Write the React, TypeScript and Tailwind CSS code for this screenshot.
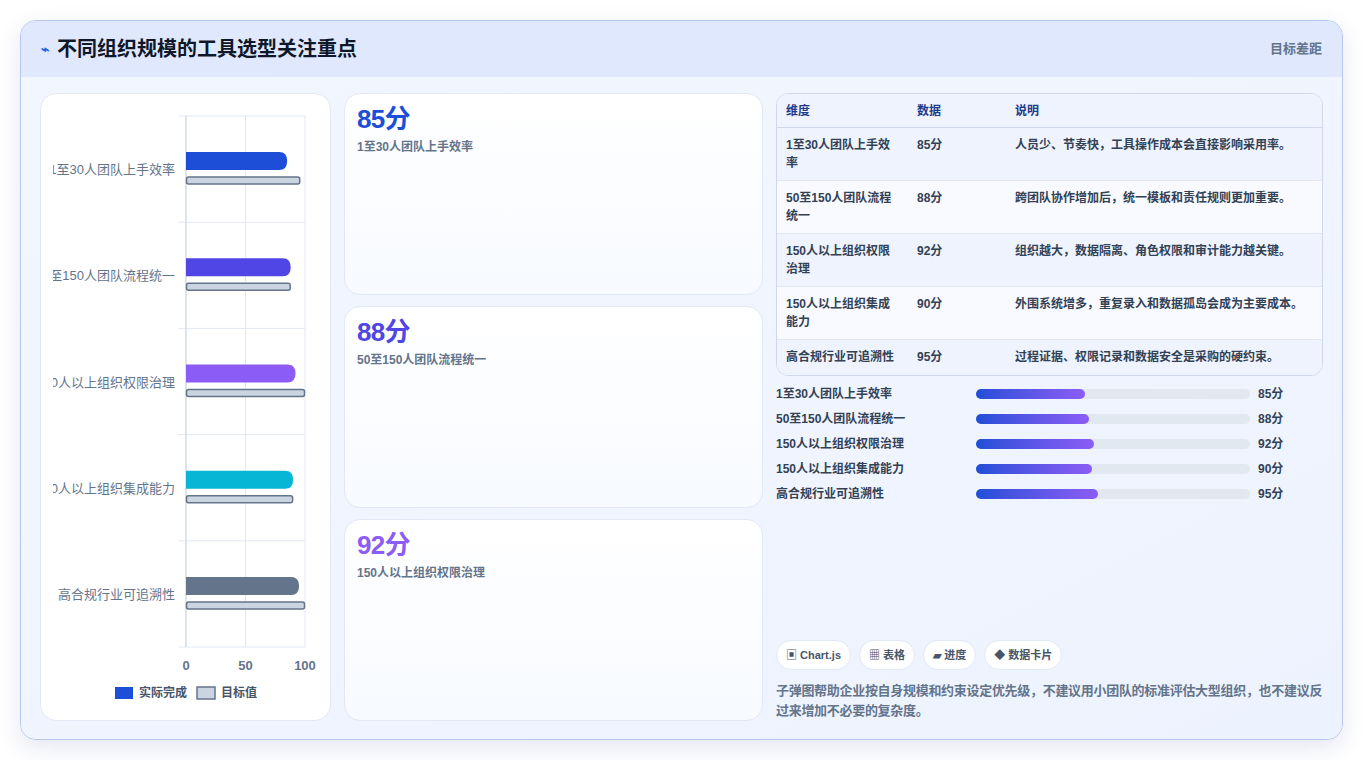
import React from "react";

const F = { fontFamily: '"Liberation Sans","Noto Sans CJK SC",sans-serif' };
const cats = [
  { l: "1至30人团队上手效率", v: 85, t: 96, c: "#1d4ed8" },
  { l: "50至150人团队流程统一", v: 88, t: 88, c: "#4f46e5" },
  { l: "150人以上组织权限治理", v: 92, t: 100, c: "#8b5cf6" },
  { l: "150人以上组织集成能力", v: 90, t: 90, c: "#06b6d4" },
  { l: "高合规行业可追溯性", v: 95, t: 100, c: "#64748b" },
];
const rows = [
  ["1至30人团队上手效率", "85分", "人员少、节奏快，工具操作成本会直接影响采用率。"],
  ["50至150人团队流程统一", "88分", "跨团队协作增加后，统一模板和责任规则更加重要。"],
  ["150人以上组织权限治理", "92分", "组织越大，数据隔离、角色权限和审计能力越关键。"],
  ["150人以上组织集成能力", "90分", "外围系统增多，重复录入和数据孤岛会成为主要成本。"],
  ["高合规行业可追溯性", "95分", "过程证据、权限记录和数据安全是采购的硬约束。"],
];

function Chart() {
  const x0 = 145, sc = 1.19, top = 22, step = 106.2;
  return (
    <svg width="290" height="627" className="absolute inset-0" style={F}>
      <defs>
        <clipPath id="cl"><rect x="12" y="0" width="280" height="627" /></clipPath>
      </defs>
      {[0, 50, 100].map((v) => (
        <line key={v} x1={x0 + v * sc} x2={x0 + v * sc} y1={top} y2={top + step * 5} stroke="#e2e8f0" />
      ))}
      {[0, 1, 2, 3, 4, 5].map((i) => (
        <line key={i} x1={137} x2={x0 + 100 * sc} y1={top + i * step} y2={top + i * step} stroke="#e2e8f0" />
      ))}
      <line x1={x0} x2={x0} y1={top} y2={top + step * 5} stroke="#cbd5e1" />
      {cats.map((c, i) => {
        const cy = top + step * i + step / 2;
        const w = c.v * sc;
        return (
          <g key={i}>
            <text x="134" y={cy + 5} textAnchor="end" fontSize="13" fill="#64748b" clipPath="url(#cl)">{c.l}</text>
            <rect x={x0 + 0.5} y={cy + 8} width={c.t * sc - 1} height={7} rx="2" fill="#cbd5e1" stroke="#64748b" strokeWidth="1.5" />
            <path d={`M${x0} ${cy - 17} H${x0 + w - 8} Q${x0 + w} ${cy - 17} ${x0 + w} ${cy - 8} Q${x0 + w} ${cy + 1} ${x0 + w - 8} ${cy + 1} H${x0} Z`} fill={c.c} />
          </g>
        );
      })}
      {[0, 50, 100].map((v) => (
        <text key={v} x={x0 + v * sc} y={576} textAnchor="middle" fontSize="13" fontWeight="bold" fill="#64748b">{v}</text>
      ))}
      <rect x="74" y="593" width="18" height="12" fill="#1d4ed8" />
      <text x="98" y="603" fontSize="12" fontWeight="bold" fill="#475569">实际完成</text>
      <rect x="156" y="593" width="18" height="12" fill="#cbd5e1" stroke="#64748b" strokeWidth="1.5" />
      <text x="180" y="603" fontSize="12" fontWeight="bold" fill="#475569">目标值</text>
    </svg>
  );
}

function Kpi({ v, l, c }: { v: string; l: string; c: string }) {
  return (
    <div className="flex-1 rounded-2xl border border-[#e2e8f5] bg-gradient-to-b from-white to-[#f7faff] px-[12px] pt-[9px]">
      <div className="text-[26px] font-bold leading-[32px] tracking-tight" style={{ color: c }}>{v}</div>
      <div className="mt-[3px] text-[12px] font-bold text-[#64748b]">{l}</div>
    </div>
  );
}

export default function App() {
  return (
    <div className="h-[760px] w-[1363px] bg-white p-[20px] pb-[20px]" style={F}>
      <div className="flex h-[720px] w-[1323px] flex-col overflow-hidden rounded-[16px] border border-[#b9c6ee] bg-[#eff4fe] shadow-[0_8px_24px_rgba(30,58,138,0.12)]">
        <div className="flex h-[56px] shrink-0 items-center justify-between bg-[#dfe8fd] pl-[20px] pr-[20px]">
          <div className="flex items-center gap-[8px]">
            <span className="text-[14px] font-bold text-[#2563eb]">⌁</span>
            <span className="text-[20px] font-bold text-[#0f172a]">不同组织规模的工具选型关注重点</span>
          </div>
          <span className="text-[13px] font-bold text-[#64748b]">目标差距</span>
        </div>
        <div className="flex flex-1 gap-[13px] bg-gradient-to-br from-[#f2f6fe] to-[#edf3fe] px-[19px] pb-[18px] pt-[16px]">
          <div className="relative h-[628px] w-[291px] shrink-0 rounded-2xl border border-[#e2e8f5] bg-white">
            <Chart />
          </div>
          <div className="flex w-[419px] shrink-0 flex-col gap-[11px]">
            <Kpi v="85分" l="1至30人团队上手效率" c="#1d4ed8" />
            <Kpi v="88分" l="50至150人团队流程统一" c="#4f46e5" />
            <Kpi v="92分" l="150人以上组织权限治理" c="#8b5cf6" />
          </div>
          <div className="flex flex-1 flex-col">
            <div className="overflow-hidden rounded-xl border border-[#cfd8ea] bg-white text-[12px]">
              <div className="flex h-[34px] items-center border-b border-[#cfd8ea] bg-[#eef3fe] font-bold text-[#1e3a8a]">
                <div className="w-[140px] shrink-0 pl-[9px]">维度</div>
                <div className="w-[98px] shrink-0">数据</div>
                <div>说明</div>
              </div>
              {rows.map((r, i) => (
                <div key={i} className={`flex border-b border-[#e2e8f0] pt-[8px] font-bold text-[#334155] last:border-b-0 ${i === 4 ? "h-[35px]" : "h-[53px]"} ${i % 2 === 0 ? "bg-[#eef3fd]" : "bg-[#f8faff]"}`}>
                  <div className="w-[140px] shrink-0 pl-[9px] pr-[20px] leading-[18px]">{r[0]}</div>
                  <div className="w-[98px] shrink-0 leading-[18px]">{r[1]}</div>
                  <div className="leading-[18px]">{r[2]}</div>
                </div>
              ))}
            </div>
            <div className="mt-[9px] flex flex-col gap-[7px]">
              {cats.map((c, i) => (
                <div key={i} className="flex h-[18px] items-center text-[12px] font-bold text-[#334155]">
                  <div className="w-[200px]">{c.l}</div>
                  <div className="h-[10px] w-[274px] rounded-full bg-[#e2e8f0]">
                    <div className="h-full rounded-full bg-gradient-to-r from-[#1d4ed8] to-[#8b5cf6]" style={{ width: `${c.v * 0.47}%` }} />
                  </div>
                  <div className="ml-[8px]">{c.v}分</div>
                </div>
              ))}
            </div>
            <div className="flex-1" />
            <div className="flex gap-[8px] text-[11px] font-bold text-[#475569]">
              <span className="rounded-full border border-[#e2e8f5] bg-white px-[9px] py-[6px]">▣ Chart.js</span>
              <span className="rounded-full border border-[#e2e8f5] bg-white px-[9px] py-[6px]">▦ 表格</span>
              <span className="rounded-full border border-[#e2e8f5] bg-white px-[9px] py-[6px]">▰ 进度</span>
              <span className="rounded-full border border-[#e2e8f5] bg-white px-[9px] py-[6px]">◆ 数据卡片</span>
            </div>
            <p className="mt-[11px] text-[13px] font-bold leading-[20px] tracking-[-0.3px] text-[#64748b]">子弹图帮助企业按自身规模和约束设定优先级，不建议用小团队的标准评估大型组织，也不建议反过来增加不必要的复杂度。</p>
          </div>
        </div>
      </div>
    </div>
  );
}
